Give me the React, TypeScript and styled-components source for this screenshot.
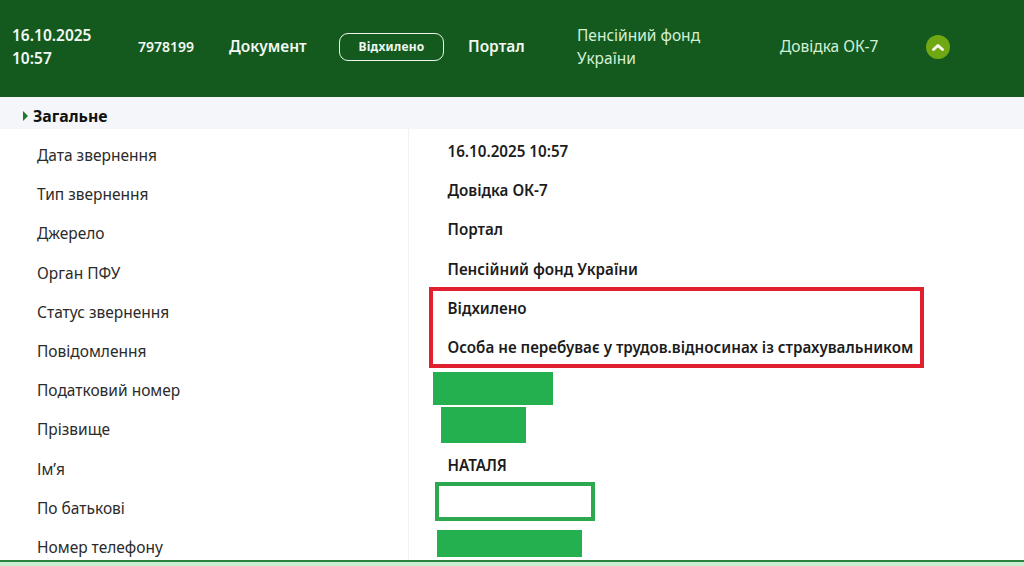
import React from "react";
import styled, { createGlobalStyle } from "styled-components";

const GlobalStyle = createGlobalStyle`
  html, body {
    margin: 0;
    padding: 0;
    height: 100%;
    overflow: hidden;
    background: #fff;
  }
  body {
    font-family: "Noto Sans", "Open Sans", sans-serif;
  }
`;

const Page = styled.div`
  position: relative;
  height: 566px;
  overflow: hidden;
  display: flex;
  flex-direction: column;
`;

const Header = styled.header`
  flex: none;
  height: 97px;
  box-sizing: border-box;
  padding-bottom: 4px;
  background: #145a1f;
  display: flex;
  align-items: center;
  color: #fff;
`;

const HeaderCell = styled.div<{ $width: number; $light?: boolean; $bold?: boolean; $size?: number; $inset?: number }>`
  flex: none;
  width: ${(p) => p.$width}px;
  box-sizing: border-box;
  padding-left: ${(p) => p.$inset ?? 0}px;
  font-size: ${(p) => p.$size ?? 15.5}px;
  line-height: 23px;
  font-weight: ${(p) => (p.$bold ? 600 : 400)};
  color: ${(p) => (p.$light ? "#d3f0d4" : "#f2f8f2")};
`;

const StatusBadge = styled.div`
  width: 105px;
  height: 28px;
  box-sizing: border-box;
  border: 1.5px solid #eef6ee;
  border-radius: 9px;
  display: flex;
  align-items: center;
  justify-content: center;
  font-size: 12px;
  font-weight: 700;
  letter-spacing: 0.2px;
  color: #eef6ee;
`;

const CollapseButton = styled.button`
  width: 24px;
  height: 24px;
  padding: 0;
  border: none;
  border-radius: 50%;
  background: #6fa812;
  display: flex;
  align-items: center;
  justify-content: center;
`;

const SectionBar = styled.div`
  flex: none;
  height: 32px;
  box-sizing: border-box;
  padding: 5px 0 0 23px;
  background: #f4f6f9;
  display: flex;
  align-items: center;
  gap: 5px;
  font-size: 15.8px;
  font-weight: 700;
  color: #111;
`;

const Caret = styled.span`
  width: 0;
  height: 0;
  border-style: solid;
  border-width: 5.5px 0 5.5px 5.5px;
  border-color: transparent transparent transparent #1f7a2c;
`;

const Body = styled.div`
  flex: 1;
  min-height: 0;
  display: flex;
  overflow: hidden;
`;

const LabelColumn = styled.div`
  flex: none;
  width: 409px;
  box-sizing: border-box;
  border-right: 1px solid #f1f2f4;
  padding: 7px 0 0 37px;
`;

const Label = styled.div`
  height: 39.2px;
  line-height: 39.2px;
  font-size: 15.5px;
  color: #2b2b2b;
  white-space: nowrap;
`;

const ValueColumn = styled.div`
  position: relative;
  flex: 1;
  padding: 3px 0 0 38.5px;
`;

const Value = styled.div`
  height: 39.2px;
  line-height: 39.2px;
  font-size: 15.2px;
  font-weight: 600;
  color: #1c1c1c;
  white-space: nowrap;
`;

const RedFrame = styled.div`
  position: absolute;
  left: 20px;
  top: 158px;
  width: 495px;
  height: 81px;
  box-sizing: border-box;
  border: 4px solid #e0202e;
`;

const Redaction = styled.div<{ $left: number; $top: number; $width: number; $height: number; $outline?: boolean }>`
  position: absolute;
  left: ${(p) => p.$left}px;
  top: ${(p) => p.$top}px;
  width: ${(p) => p.$width}px;
  height: ${(p) => p.$height}px;
  box-sizing: border-box;
  background: ${(p) => (p.$outline ? "#fff" : "#25b04f")};
  border: ${(p) => (p.$outline ? "4px solid #2ba850" : "none")};
`;

const Footer = styled.div`
  flex: none;
  height: 6px;
  box-sizing: border-box;
  border-top: 2px solid #2b7f3d;
  background: #c9efd2;
`;

const labels = [
  "Дата звернення",
  "Тип звернення",
  "Джерело",
  "Орган ПФУ",
  "Статус звернення",
  "Повідомлення",
  "Податковий номер",
  "Прізвище",
  "Ім’я",
  "По батькові",
  "Номер телефону",
];

const values = [
  "16.10.2025 10:57",
  "Довідка ОК-7",
  "Портал",
  "Пенсійний фонд України",
  "Відхилено",
  "Особа не перебуває у трудов.відносинах із страхувальником",
  "",
  "",
  "НАТАЛЯ",
];

const App: React.FC = () => (
  <Page>
    <GlobalStyle />
    <Header>
      <HeaderCell $width={138} $bold $inset={12}>
        16.10.2025
        <br />
        10:57
      </HeaderCell>
      <HeaderCell $width={91} $bold $size={14}>
        7978199
      </HeaderCell>
      <HeaderCell $width={110} $bold>
        Документ
      </HeaderCell>
      <HeaderCell $width={129}>
        <StatusBadge>Відхилено</StatusBadge>
      </HeaderCell>
      <HeaderCell $width={109} $bold>
        Портал
      </HeaderCell>
      <HeaderCell $width={203} $light>
        Пенсійний фонд
        <br />
        України
      </HeaderCell>
      <HeaderCell $width={146} $light>
        Довідка ОК-7
      </HeaderCell>
      <CollapseButton aria-label="Згорнути">
        <svg width="14" height="10" viewBox="0 0 14 10">
          <path d="M2.5 7.5 7 3.5l4.5 4" fill="none" stroke="#f6f9ec" strokeWidth="3" strokeLinecap="round" strokeLinejoin="round" />
        </svg>
      </CollapseButton>
    </Header>
    <SectionBar>
      <Caret />
      Загальне
    </SectionBar>
    <Body>
      <LabelColumn>
        {labels.map((label) => (
          <Label key={label}>{label}</Label>
        ))}
      </LabelColumn>
      <ValueColumn>
        {values.map((value, i) => (
          <Value key={i}>{value}</Value>
        ))}
        <RedFrame />
        <Redaction $left={24} $top={243} $width={120} $height={33} />
        <Redaction $left={32} $top={278} $width={85} $height={36} />
        <Redaction $left={26} $top={353} $width={160} $height={39} $outline />
        <Redaction $left={28} $top={401} $width={145} $height={27} />
      </ValueColumn>
    </Body>
    <Footer />
  </Page>
);

export default App;
